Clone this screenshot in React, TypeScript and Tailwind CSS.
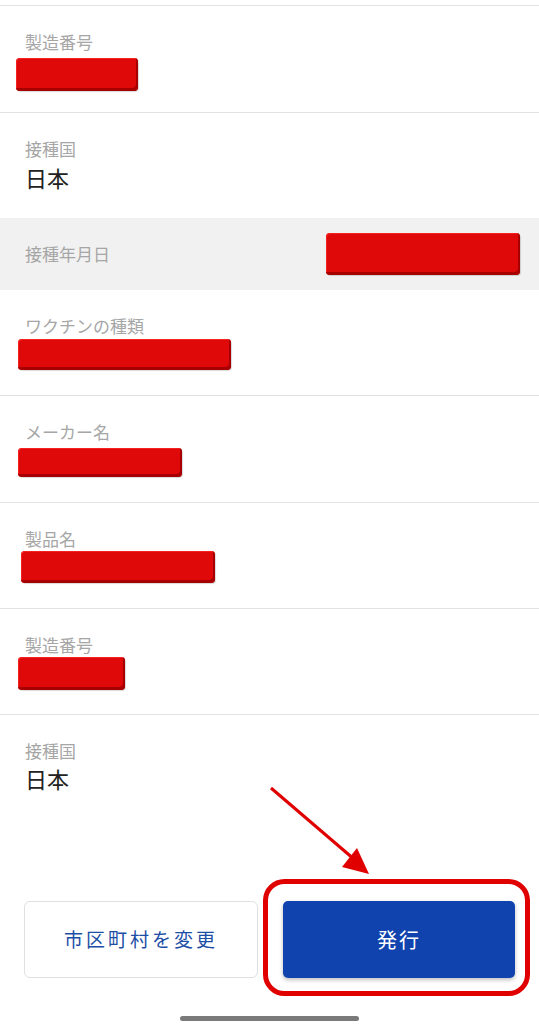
import React from 'react';

const font = { fontFamily: '"Noto Sans CJK JP", "Noto Sans", sans-serif' };

function Redact({ w, h, ml, mt }: { w: string; h: string; ml: string; mt: string }) {
    return (
        <div
            className={`${w} ${h} ${ml} ${mt} rounded-[4px] bg-[#e00909] shadow-[inset_-2px_-3px_0_#a60000,inset_1px_1px_0_#f52222,1px_1px_1px_rgba(0,0,0,0.15)]`}
        />
    );
}

function Label({ children }: { children: React.ReactNode }) {
    return <div className="pl-[25px] text-[17px] leading-[20px] text-[#a6a6a6]">{children}</div>;
}

export default function App() {
    return (
        <div className="relative w-full h-[1024px] bg-white overflow-hidden flex flex-col" style={font}>
            <div className="h-[5px] shrink-0" />

            {/* 製造番号 */}
            <div className="h-[108px] shrink-0 border-y border-[#e2e2e2] pt-[26px]">
                <Label>製造番号</Label>
                <Redact w="w-[122px]" h="h-[33px]" ml="ml-[16px]" mt="mt-[6px]" />
            </div>

            {/* 接種国 */}
            <div className="h-[105px] shrink-0 pt-[26px]">
                <Label>接種国</Label>
                <div className="pl-[25px] mt-[3px] text-[22px] leading-[30px] text-[#222]">日本</div>
            </div>

            {/* 接種年月日 */}
            <div className="h-[72px] shrink-0 bg-[#f1f1f1] flex items-center justify-between pr-[19px]">
                <Label>接種年月日</Label>
                <Redact w="w-[194px]" h="h-[42px]" ml="ml-0" mt="mt-[-1px]" />
            </div>

            {/* ワクチンの種類 */}
            <div className="h-[106px] shrink-0 border-b border-[#e2e2e2] pt-[26px]">
                <Label>ワクチンの種類</Label>
                <Redact w="w-[213px]" h="h-[31px]" ml="ml-[18px]" mt="mt-[3px]" />
            </div>

            {/* メーカー名 */}
            <div className="h-[107px] shrink-0 border-b border-[#e2e2e2] pt-[26px]">
                <Label>メーカー名</Label>
                <Redact w="w-[164px]" h="h-[29px]" ml="ml-[18px]" mt="mt-[6px]" />
            </div>

            {/* 製品名 */}
            <div className="h-[106px] shrink-0 border-b border-[#e2e2e2] pt-[26px]">
                <Label>製品名</Label>
                <Redact w="w-[194px]" h="h-[32px]" ml="ml-[21px]" mt="mt-[2px]" />
            </div>

            {/* 製造番号 */}
            <div className="h-[106px] shrink-0 border-b border-[#e2e2e2] pt-[26px]">
                <Label>製造番号</Label>
                <Redact w="w-[107px]" h="h-[33px]" ml="ml-[18px]" mt="mt-[2px]" />
            </div>

            {/* 接種国 */}
            <div className="flex-1 pt-[26px]">
                <Label>接種国</Label>
                <div className="pl-[25px] mt-[2px] text-[22px] leading-[30px] text-[#222]">日本</div>
            </div>

            {/* buttons */}
            <div className="shrink-0 flex gap-[25px] px-[24px]">
                <button className="flex-1 h-[77px] rounded-[6px] border border-[#e0e0e0] bg-white text-[19px] tracking-[3px] text-[#1c4ea6]">
                    市区町村を変更
                </button>
                <button className="flex-1 h-[77px] rounded-[5px] bg-[#1043ae] text-[20px] tracking-[2px] text-white shadow-[0_2px_4px_rgba(0,0,0,0.25)]">
                    発行
                </button>
            </div>

            <div className="shrink-0 h-[46px] flex items-end justify-center pb-[3px]">
                <div className="w-[179px] h-[5px] rounded-full bg-[#7a7a7a]" />
            </div>

            {/* annotation overlay */}
            <svg className="absolute inset-0 pointer-events-none" width="539" height="1024" viewBox="0 0 539 1024">
                <rect x="265.5" y="881.5" width="262" height="112" rx="19" fill="none" stroke="#e00000" strokeWidth="5" />
                <line x1="271" y1="788" x2="355" y2="860" stroke="#e00000" strokeWidth="3" />
                <polygon points="369,874 357,848 342,867" fill="#e00000" />
            </svg>
        </div>
    );
}
